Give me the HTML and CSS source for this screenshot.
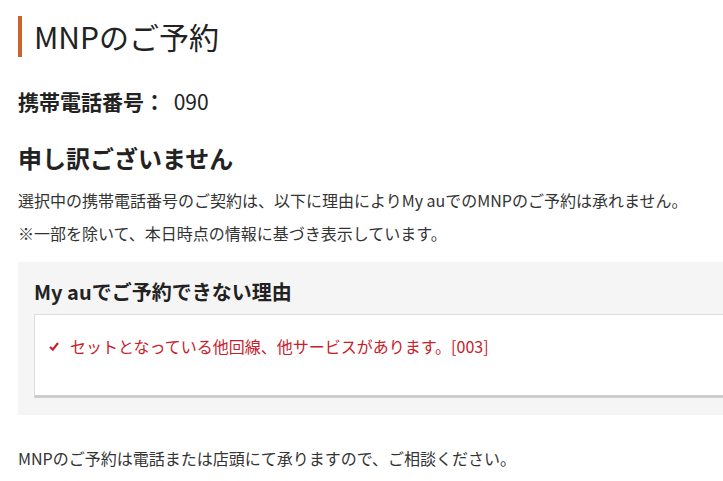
FILE: index.html
```html
<!DOCTYPE html>
<html lang="ja">
<head>
    <meta charset="UTF-8">
    <meta name="viewport" content="width=device-width, initial-scale=1.0">
    <title>MNPのご予約</title>
    <link rel="stylesheet" href="styles.css">
</head>
<body>
    <div class="page">
        <h1 class="page-title">MNPのご予約</h1>

        <div class="phone-row">
            <span class="phone-label">携帯電話番号：</span>
            <span class="phone-number">090</span>
        </div>

        <h2 class="sorry">申し訳ございません</h2>
        <p class="lead">選択中の携帯電話番号のご契約は、以下に理由によりMy auでのMNPのご予約は承れません。</p>
        <p class="note">※一部を除いて、本日時点の情報に基づき表示しています。</p>

        <!-- reasons -->
        <div class="reason-box">
            <h3 class="reason-title">My auでご予約できない理由</h3>
            <div class="reason-card">
                <ul class="reason-list">
                    <li>
                        <svg class="check" width="10" height="9" viewBox="0 0 10 9">
                            <polyline points="1,5 3.8,7.6 9,1" fill="none" stroke="#c8202a" stroke-width="2.2"/>
                        </svg>
                        セットとなっている他回線、他サービスがあります。[003]
                    </li>
                </ul>
            </div>
        </div>

        <p class="footer-note">MNPのご予約は電話または店頭にて承りますので、ご相談ください。</p>
    </div>
</body>
</html>
```

FILE: styles.css
```css
html, body {
    margin: 0;
    padding: 0;
    overflow: hidden;
    background: #fff;
}
body {
    font-family: "Noto Sans CJK JP", "Noto Sans", sans-serif;
    color: #333;
}
.page {
    width: 760px;
    padding-left: 18px;
}
.page-title {
    margin: 16px 0 0;
    border-left: 4px solid #c8642c;
    padding-left: 12px;
    font-size: 30px;
    font-weight: normal;
    line-height: 41px;
    color: #222;
}
.phone-row {
    margin-top: 29px;
    font-size: 21px;
    line-height: 30px;
    color: #222;
}
.phone-label {
    font-weight: bold;
}
.phone-number {
    margin-left: 4px;
}
.sorry {
    margin: 25px 0 0;
    font-size: 24px;
    line-height: 34px;
    color: #222;
}
.lead,
.note,
.footer-note {
    margin: 0;
    font-size: 16px;
    line-height: 26px;
}
.lead {
    margin-top: 12px;
}
.note {
    margin-top: 7px;
}
.reason-box {
    margin-top: 16px;
    background: #f5f5f5;
    padding: 15px 0 17px 16px;
}
.reason-title {
    margin: 0;
    font-size: 20px;
    line-height: 30px;
    color: #222;
}
.reason-card {
    margin-top: 7px;
    background: #fff;
    border: 1px solid #ddd;
    border-bottom: 3px solid #ccc;
    padding: 19px 14px 37px;
}
.reason-list {
    list-style: none;
    margin: 0;
    padding: 0;
}
.reason-list li {
    display: flex;
    align-items: center;
    gap: 11px;
    font-size: 16px;
    line-height: 24px;
    color: #c8202a;
}
.footer-note {
    margin-top: 30px;
}
```
